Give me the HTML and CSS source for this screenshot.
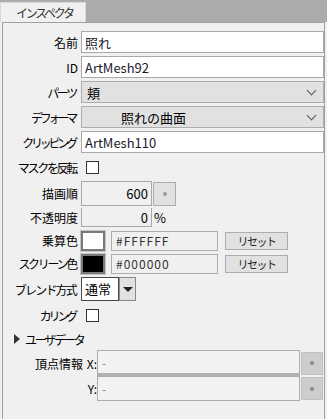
FILE: index.html
```html
<!DOCTYPE html>
<html lang="ja">
<head>
    <meta charset="UTF-8">
    <title>インスペクタ</title>
    <link rel="stylesheet" href="styles.css">
</head>
<body>
    <div class="tabbar">
        <div class="tab">インスペクタ</div>
    </div>
    <div class="frame">
        <div class="panel">
            <div class="row r-name">
                <label class="lbl">名前</label>
                <div class="field text">照れ</div>
            </div>
            <div class="row r-id">
                <label class="lbl">ID</label>
                <div class="field text">ArtMesh92</div>
            </div>
            <div class="row r-parts">
                <label class="lbl kana">パーツ</label>
                <div class="field select"><span class="val">頬</span><span class="chev"></span></div>
            </div>
            <div class="row r-deform">
                <label class="lbl kana tight">デフォーマ</label>
                <div class="field select"><span class="val indent">照れの曲面</span><span class="chev"></span></div>
            </div>
            <div class="row r-clip">
                <label class="lbl kana tight">クリッピング</label>
                <div class="field text">ArtMesh110</div>
            </div>
            <div class="row r-mask">
                <label class="lbl kana">マスクを反転</label>
                <span class="check"></span>
            </div>
            <div class="row r-order">
                <label class="lbl">描画順</label>
                <div class="field num">600</div>
                <button class="dotbtn"><span class="dot"></span></button>
            </div>
            <div class="row r-opacity">
                <label class="lbl">不透明度</label>
                <div class="field num">0</div>
                <span class="unit">%</span>
            </div>
            <div class="row r-mul">
                <label class="lbl">乗算色</label>
                <span class="swatch white"></span>
                <div class="field hex">#FFFFFF</div>
                <button class="reset">リセット</button>
            </div>
            <div class="row r-scr">
                <label class="lbl kana">スクリーン色</label>
                <span class="swatch black"></span>
                <div class="field hex">#000000</div>
                <button class="reset">リセット</button>
            </div>
            <div class="row r-blend">
                <label class="lbl kana loose">ブレンド方式</label>
                <div class="combo">通常</div>
                <span class="dropbtn"><span class="tri"></span></span>
            </div>
            <div class="row r-cull">
                <label class="lbl kana tight">カリング</label>
                <span class="check"></span>
            </div>
            <div class="row r-user">
                <span class="arrow"></span>
                <span class="user">ユーザデータ</span>
            </div>
            <div class="row r-vx">
                <label class="lbl">頂点情報</label>
                <span class="axis">X:</span>
                <div class="field vert">-</div>
                <button class="dotbtn dark"><span class="dot"></span></button>
            </div>
            <div class="row r-vy">
                <label class="lbl"></label>
                <span class="axis">Y:</span>
                <div class="field vert">-</div>
                <button class="dotbtn dark"><span class="dot"></span></button>
            </div>
        </div>
    </div>
</body>
</html>
```

FILE: styles.css
```css
* {
    box-sizing: border-box;
}
body {
    margin: 0;
    background-color: #ababab;
    font-family: "Noto Sans CJK JP", "Liberation Sans", sans-serif;
    font-size: 12px;
    color: #000;
    height: 419px;
    overflow: hidden;
}
.tabbar {
    height: 22px;
    padding-top: 2px;
}
.tab {
    width: 86px;
    height: 20px;
    background: #f0f0f0;
    border: 1px solid #d9d9d9;
    border-bottom: none;
    padding-left: 15px;
    line-height: 19px;
    color: #333;
    letter-spacing: -2.3px;
}
.frame {
    background: #f0f0f0;
    padding: 0 2px 0 2px;
    height: 397px;
}
.panel {
    border-top: 1px solid #a0a0a0;
    border-left: 1px solid #a0a0a0;
    border-right: 1px solid #a0a0a0;
    height: 100%;
}
.row {
    display: flex;
    align-items: center;
}
.lbl {
    width: 78px;
    flex: none;
    text-align: right;
    padding-right: 3px;
    white-space: nowrap;
}
.kana {
    letter-spacing: -2.3px;
    padding-right: 5px;
}
.kana.tight {
    letter-spacing: -3.2px;
    padding-right: 6px;
}
.kana.loose {
    letter-spacing: -1.8px;
}
.field {
    flex: none;
    height: 100%;
    border: 1px solid #a9a9a9;
    display: flex;
    align-items: center;
    white-space: nowrap;
}
.text {
    flex: 1;
    background: #fff;
    padding-left: 3px;
    font-size: 13px;
    color: #1a1a2e;
}
.select {
    flex: 1;
    background: #e1e1e1;
    border-color: #adadad;
    padding-left: 5px;
    justify-content: space-between;
}
.val {
    font-size: 13px;
}
.val.indent {
    padding-left: 34px;
}
.chev {
    width: 7px;
    height: 7px;
    border-right: 1px solid #555;
    border-bottom: 1px solid #555;
    transform: rotate(45deg);
    margin: -4px 8px 0 0;
}
.r-name { height: 22px; margin-top: 8px; }
.r-id { height: 22px; margin-top: 3px; }
.r-parts { height: 22px; margin-top: 3px; }
.r-deform { height: 22px; margin-top: 3px; }
.r-clip { height: 22px; margin-top: 3px; }
.r-mask { height: 14px; margin-top: 7px; }
.r-order { height: 25px; margin-top: 7px; }
.r-opacity { height: 19px; margin-top: 2px; }
.r-mul { height: 21px; margin-top: 3px; }
.r-scr { height: 21px; margin-top: 2px; }
.r-blend { height: 24px; margin-top: 3px; }
.r-cull { height: 14px; margin-top: 7px; }
.r-user { height: 14px; margin-top: 10px; }
.r-vx { height: 26px; margin-top: 4px; }
.r-vy { height: 25px; }
.check {
    width: 13px;
    height: 13px;
    border: 1px solid #333;
    background: #fff;
    margin-left: 5px;
}
.num {
    width: 71px;
    background: #f0f0f0;
    justify-content: flex-end;
    padding-right: 3px;
    font-size: 13px;
}
.r-opacity .num {
    border-top: none;
}
.unit {
    margin-left: 2px;
    font-size: 13px;
}
.dotbtn {
    width: 23px;
    height: 24px;
    margin-left: 1px;
    background: #e1e1e1;
    border: 1px solid #adadad;
    padding: 0;
    display: flex;
    align-items: center;
    justify-content: center;
}
.dot {
    width: 4px;
    height: 4px;
    border-radius: 50%;
    background: #999;
}
.swatch {
    width: 24px;
    height: 20px;
    border: 2px solid #7a7a7a;
    outline: 1px solid #c4c4c4;
    flex: none;
}
.swatch.white { background: #fff; }
.swatch.black { background: #000; }
.hex {
    width: 107px;
    margin-left: 6px;
    height: 20px;
    background: #f0f0f0;
    border-color: #adadad;
    padding-left: 4px;
    font-size: 12px;
    letter-spacing: 1px;
    color: #333;
}
.reset {
    width: 63px;
    height: 18px;
    margin-left: 7px;
    background: #e1e1e1;
    border: 1px solid #adadad;
    font-family: inherit;
    font-size: 11px;
    padding: 0;
    line-height: 14px;
    color: #222;
    letter-spacing: -1.5px;
}
.combo {
    width: 38px;
    height: 24px;
    background: #fff;
    border: 1px solid #4a4a4a;
    padding-left: 3px;
    font-size: 13px;
    line-height: 21px;
}
.dropbtn {
    width: 17px;
    height: 24px;
    background: #e1e1e1;
    border: 1px solid #8a8a8a;
    display: flex;
    align-items: center;
    justify-content: center;
}
.tri {
    border-left: 5px solid transparent;
    border-right: 5px solid transparent;
    border-top: 5px solid #222;
}
.arrow {
    margin-left: 11px;
    border-top: 5px solid transparent;
    border-bottom: 5px solid transparent;
    border-left: 6px solid #333;
}
.user {
    margin-left: 5px;
    letter-spacing: -2.2px;
}
.r-vx .lbl, .r-vy .lbl {
    width: 80px;
    padding-right: 0;
}
.axis {
    width: 14px;
    text-align: right;
    flex: none;
}
.vert {
    width: 203px;
    background: #f2f2f2;
    border-color: #adadad;
    padding-left: 4px;
    color: #888;
}
.r-vx .vert {
    border-bottom: 3px solid #b0b0b0;
}
.dotbtn.dark {
    background: #cdcdcd;
    border-color: #c0c0c0;
    height: 23px;
    width: 22px;
}
.dotbtn.dark .dot {
    background: #8a8a8a;
}
```
